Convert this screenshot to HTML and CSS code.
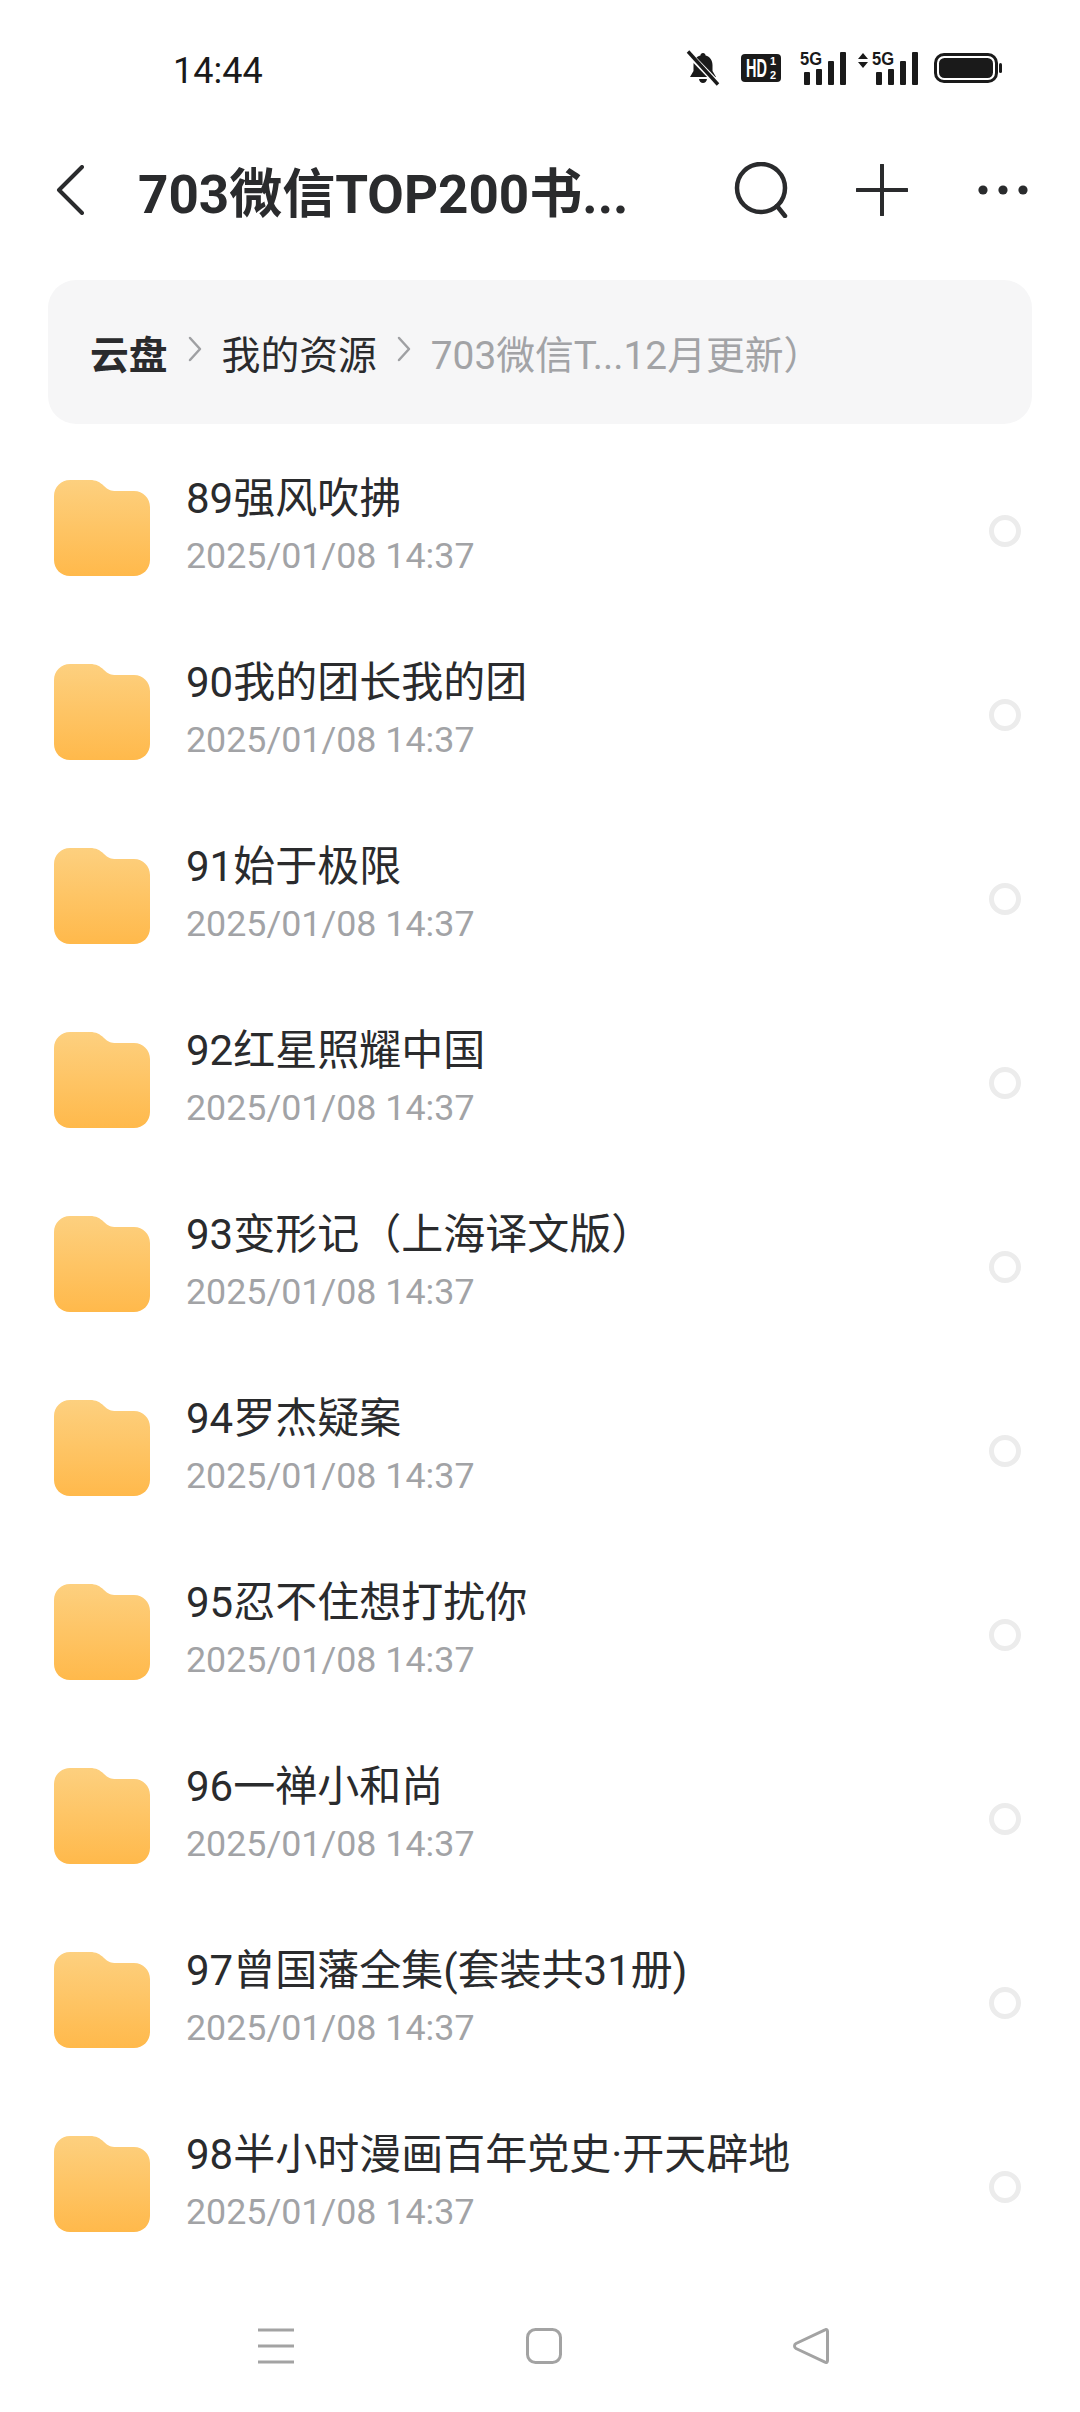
FILE: index.html
```html
<!DOCTYPE html>
<html lang="zh-CN">
<head>
    <meta charset="UTF-8">
    <meta name="viewport" content="width=device-width, initial-scale=1.0">
    <title>云盘</title>
    <link rel="stylesheet" href="styles.css">
</head>
<body>
    <svg class="defs" width="0" height="0">
        <defs>
            <linearGradient id="folder_fill" x1="0" y1="0" x2="0" y2="1">
                <stop offset="0" stop-color="#fdd07f"/>
                <stop offset="1" stop-color="#ffb94b"/>
            </linearGradient>
            <symbol id="folder" viewBox="0 0 96 96">
                <path d="M16 0H36C42 0 46 2 50 6C54 10 57 11 62 11H80C89 11 96 18 96 27V80C96 89 89 96 80 96H16C7 96 0 89 0 80V16C0 7 7 0 16 0Z" fill="url(#folder_fill)"/>
            </symbol>
        </defs>
    </svg>

    <div class="status_bar">
        <span class="time">14:44</span>
        <div class="status_icons">
            <svg class="bell" width="34" height="36" viewBox="0 0 34 36">
                <path d="M17 3C18.5 3 19.5 4 19.6 5.4C24 6.6 26.5 10 26.5 15V21L30 27H4L7.5 21V15C7.5 10 10 6.6 14.4 5.4C14.5 4 15.5 3 17 3ZM13 29H21C20.6 31.4 19 33 17 33C15 33 13.4 31.4 13 29Z" fill="#1a1a1a"/>
                <path d="M1 2L33 35" stroke="#fff" stroke-width="6"/>
                <path d="M2 1.5L32 34.5" stroke="#1a1a1a" stroke-width="3.4"/>
            </svg>
            <svg class="hd" width="40" height="28" viewBox="0 0 40 28">
                <rect width="40" height="28" rx="4" fill="#1a1a1a"/>
                <text transform="translate(5 23) scale(.58 1)" class="hd_text">HD</text>
                <text class="hd_small"><tspan x="29" y="11">1</tspan><tspan x="29" y="25">2</tspan></text>
            </svg>
            <svg class="signal" width="46" height="38" viewBox="0 -4 46 38">
                <text transform="translate(0 14) scale(.92 1)" class="g_text">5G</text>
                <rect x="4" y="21" width="6" height="13" rx="1" fill="#1a1a1a"/>
                <rect x="16" y="18" width="6" height="16" rx="1" fill="#1a1a1a"/>
                <rect x="28" y="10" width="6" height="24" rx="1" fill="#1a1a1a"/>
                <rect x="40" y="1" width="6" height="33" rx="1" fill="#1a1a1a"/>
            </svg>
            <svg class="signal" width="60" height="38" viewBox="0 -4 60 38">
                <path d="M5 2L10 8H0ZM5 17L0 11H10Z" fill="#1a1a1a"/>
                <text transform="translate(14 14) scale(.92 1)" class="g_text">5G</text>
                <rect x="18" y="21" width="6" height="13" rx="1" fill="#1a1a1a"/>
                <rect x="30" y="18" width="6" height="16" rx="1" fill="#1a1a1a"/>
                <rect x="42" y="10" width="6" height="24" rx="1" fill="#1a1a1a"/>
                <rect x="54" y="1" width="6" height="33" rx="1" fill="#1a1a1a"/>
            </svg>
            <svg class="battery" width="68" height="30" viewBox="0 0 68 30">
                <rect x="1.5" y="1.5" width="61" height="27" rx="8.5" fill="none" stroke="#1a1a1a" stroke-width="3"/>
                <rect x="5" y="5" width="54" height="20" rx="5.5" fill="#1a1a1a"/>
                <rect x="65" y="10" width="3" height="10" rx="1.5" fill="#1a1a1a"/>
            </svg>
        </div>
    </div>

    <header class="top_bar">
        <svg class="back" width="28" height="50" viewBox="0 0 28 50">
            <path d="M26 2L3 25L26 48" fill="none" stroke="#2a2b2d" stroke-width="4" stroke-linecap="round" stroke-linejoin="round"/>
        </svg>
        <h1 class="title">703微信TOP200书...</h1>
        <svg class="search" width="56" height="56" viewBox="0 0 56 56">
            <circle cx="27" cy="26" r="24" fill="none" stroke="#2a2b2d" stroke-width="4.5"/>
            <path d="M43 44L51 54" fill="none" stroke="#2a2b2d" stroke-width="4.5" stroke-linecap="round"/>
        </svg>
        <svg class="plus" width="52" height="52" viewBox="0 0 52 52">
            <path d="M26 1V51M1 26H51" fill="none" stroke="#2a2b2d" stroke-width="4" stroke-linecap="round"/>
        </svg>
        <svg class="more" width="50" height="10" viewBox="0 0 50 10">
            <circle cx="5" cy="5" r="4.6" fill="#2a2b2d"/>
            <circle cx="25" cy="5" r="4.6" fill="#2a2b2d"/>
            <circle cx="45" cy="5" r="4.6" fill="#2a2b2d"/>
        </svg>
    </header>

    <nav class="crumbs">
        <span class="crumb_root">云盘</span>
        <svg class="crumb_arrow" width="14" height="26" viewBox="0 0 14 26"><path d="M2 2L12 13L2 24" fill="none" stroke="#9fa0a3" stroke-width="2.5" stroke-linecap="round" stroke-linejoin="round"/></svg>
        <span class="crumb_mid">我的资源</span>
        <svg class="crumb_arrow" width="14" height="26" viewBox="0 0 14 26"><path d="M2 2L12 13L2 24" fill="none" stroke="#9fa0a3" stroke-width="2.5" stroke-linecap="round" stroke-linejoin="round"/></svg>
        <span class="crumb_last">703微信T...12月更新）</span>
    </nav>

    <ul class="file_list">
        <li class="file_row">
            <svg class="folder" width="96" height="96"><use href="#folder"/></svg>
            <div class="file_info"><div class="file_name">89强风吹拂</div><div class="file_date">2025/01/08 14:37</div></div>
            <span class="check"></span>
        </li>
        <li class="file_row">
            <svg class="folder" width="96" height="96"><use href="#folder"/></svg>
            <div class="file_info"><div class="file_name">90我的团长我的团</div><div class="file_date">2025/01/08 14:37</div></div>
            <span class="check"></span>
        </li>
        <li class="file_row">
            <svg class="folder" width="96" height="96"><use href="#folder"/></svg>
            <div class="file_info"><div class="file_name">91始于极限</div><div class="file_date">2025/01/08 14:37</div></div>
            <span class="check"></span>
        </li>
        <li class="file_row">
            <svg class="folder" width="96" height="96"><use href="#folder"/></svg>
            <div class="file_info"><div class="file_name">92红星照耀中国</div><div class="file_date">2025/01/08 14:37</div></div>
            <span class="check"></span>
        </li>
        <li class="file_row">
            <svg class="folder" width="96" height="96"><use href="#folder"/></svg>
            <div class="file_info"><div class="file_name">93变形记（上海译文版）</div><div class="file_date">2025/01/08 14:37</div></div>
            <span class="check"></span>
        </li>
        <li class="file_row">
            <svg class="folder" width="96" height="96"><use href="#folder"/></svg>
            <div class="file_info"><div class="file_name">94罗杰疑案</div><div class="file_date">2025/01/08 14:37</div></div>
            <span class="check"></span>
        </li>
        <li class="file_row">
            <svg class="folder" width="96" height="96"><use href="#folder"/></svg>
            <div class="file_info"><div class="file_name">95忍不住想打扰你</div><div class="file_date">2025/01/08 14:37</div></div>
            <span class="check"></span>
        </li>
        <li class="file_row">
            <svg class="folder" width="96" height="96"><use href="#folder"/></svg>
            <div class="file_info"><div class="file_name">96一禅小和尚</div><div class="file_date">2025/01/08 14:37</div></div>
            <span class="check"></span>
        </li>
        <li class="file_row">
            <svg class="folder" width="96" height="96"><use href="#folder"/></svg>
            <div class="file_info"><div class="file_name">97曾国藩全集(套装共31册)</div><div class="file_date">2025/01/08 14:37</div></div>
            <span class="check"></span>
        </li>
        <li class="file_row">
            <svg class="folder" width="96" height="96"><use href="#folder"/></svg>
            <div class="file_info"><div class="file_name">98半小时漫画百年党史·开天辟地</div><div class="file_date">2025/01/08 14:37</div></div>
            <span class="check"></span>
        </li>
    </ul>

    <footer class="nav_bar">
        <svg width="36" height="36" viewBox="0 0 36 36">
            <path d="M0 2H36M0 18H36M0 34H36" fill="none" stroke="#a3a3a3" stroke-width="3"/>
        </svg>
        <svg width="36" height="36" viewBox="0 0 36 36">
            <rect x="1.5" y="1.5" width="33" height="33" rx="8" fill="none" stroke="#a3a3a3" stroke-width="3"/>
        </svg>
        <svg width="36" height="36" viewBox="0 0 36 36">
            <path d="M32 1.8C33.5 1 34.5 2 34.5 3.5V32.5C34.5 34 33.5 35 32 34.2L3 20.5C1 19.3 1 16.7 3 15.5Z" fill="none" stroke="#a3a3a3" stroke-width="3" stroke-linejoin="round"/>
        </svg>
    </footer>
</body>
</html>
```

FILE: styles.css
```css
* {
    box-sizing: border-box;
}

html, body {
    margin: 0;
    padding: 0;
}

body {
    width: 1080px;
    height: 2412px;
    overflow: hidden;
    background-color: #fff;
    color: #2a2b2d;
    font-family: Roboto, "Noto Sans CJK SC", sans-serif;
}

.defs {
    display: block;
    height: 0;
}

/* status bar */
.status_bar {
    height: 140px;
    padding: 0 78px 4px 173px;
    display: flex;
    align-items: center;
    justify-content: space-between;
}

.time {
    margin-top: 6px;
    font-size: 36px;
    color: #1a1a1a;
}

.status_icons {
    display: flex;
    align-items: center;
    gap: 12px;
}

.bell {
    margin-right: 9px;
}

.hd {
    margin-right: 7px;
}

.hd_text {
    font: bold 25px "Liberation Sans", sans-serif;
    fill: #fff;
}

.hd_small {
    font: bold 11px "Liberation Sans", sans-serif;
    fill: #fff;
}

.g_text {
    font: bold 18px "Liberation Sans", sans-serif;
    fill: #1a1a1a;
}

.signal {
    margin-top: -4px;
}

.battery {
    margin-left: 4px;
}

/* title row */
.top_bar {
    height: 100px;
    padding: 0 52px 0 56px;
    display: flex;
    align-items: center;
}

.title {
    flex: 1;
    margin: 0 0 0 54px;
    font-size: 53px;
    font-weight: 700;
    white-space: nowrap;
}

.plus {
    margin-left: 66px;
}

.more {
    margin-left: 70px;
}

/* breadcrumb */
.crumbs {
    height: 144px;
    margin: 40px 48px 12px;
    padding: 0 42px 0;
    display: flex;
    align-items: center;
    background-color: #f6f6f7;
    border-radius: 28px;
    font-size: 38.8px;
    white-space: nowrap;
}

.crumb_root {
    font-weight: 700;
}

.crumb_arrow {
    margin: -6px 20px 0 20px;
}

.crumb_last {
    color: #a2a3a6;
}

/* file rows */
.file_list {
    margin: 0;
    padding: 0;
    list-style: none;
}

.file_row {
    height: 184px;
    padding: 0 59px 0 54px;
    display: flex;
    align-items: center;
}

.file_info {
    flex: 1;
    margin-left: 36px;
    padding-bottom: 3px;
}

.file_name {
    font-size: 42px;
    line-height: 58px;
    white-space: nowrap;
}

.file_date {
    font-size: 35.8px;
    line-height: 56px;
    color: #a2a3a6;
}

.check {
    width: 32px;
    height: 32px;
    margin-top: 6px;
    border: 5px solid #ececec;
    border-radius: 50%;
}

/* system navigation */
.nav_bar {
    margin-top: 52px;
    padding: 0 251px 0 258px;
    display: flex;
    justify-content: space-between;
}
```
